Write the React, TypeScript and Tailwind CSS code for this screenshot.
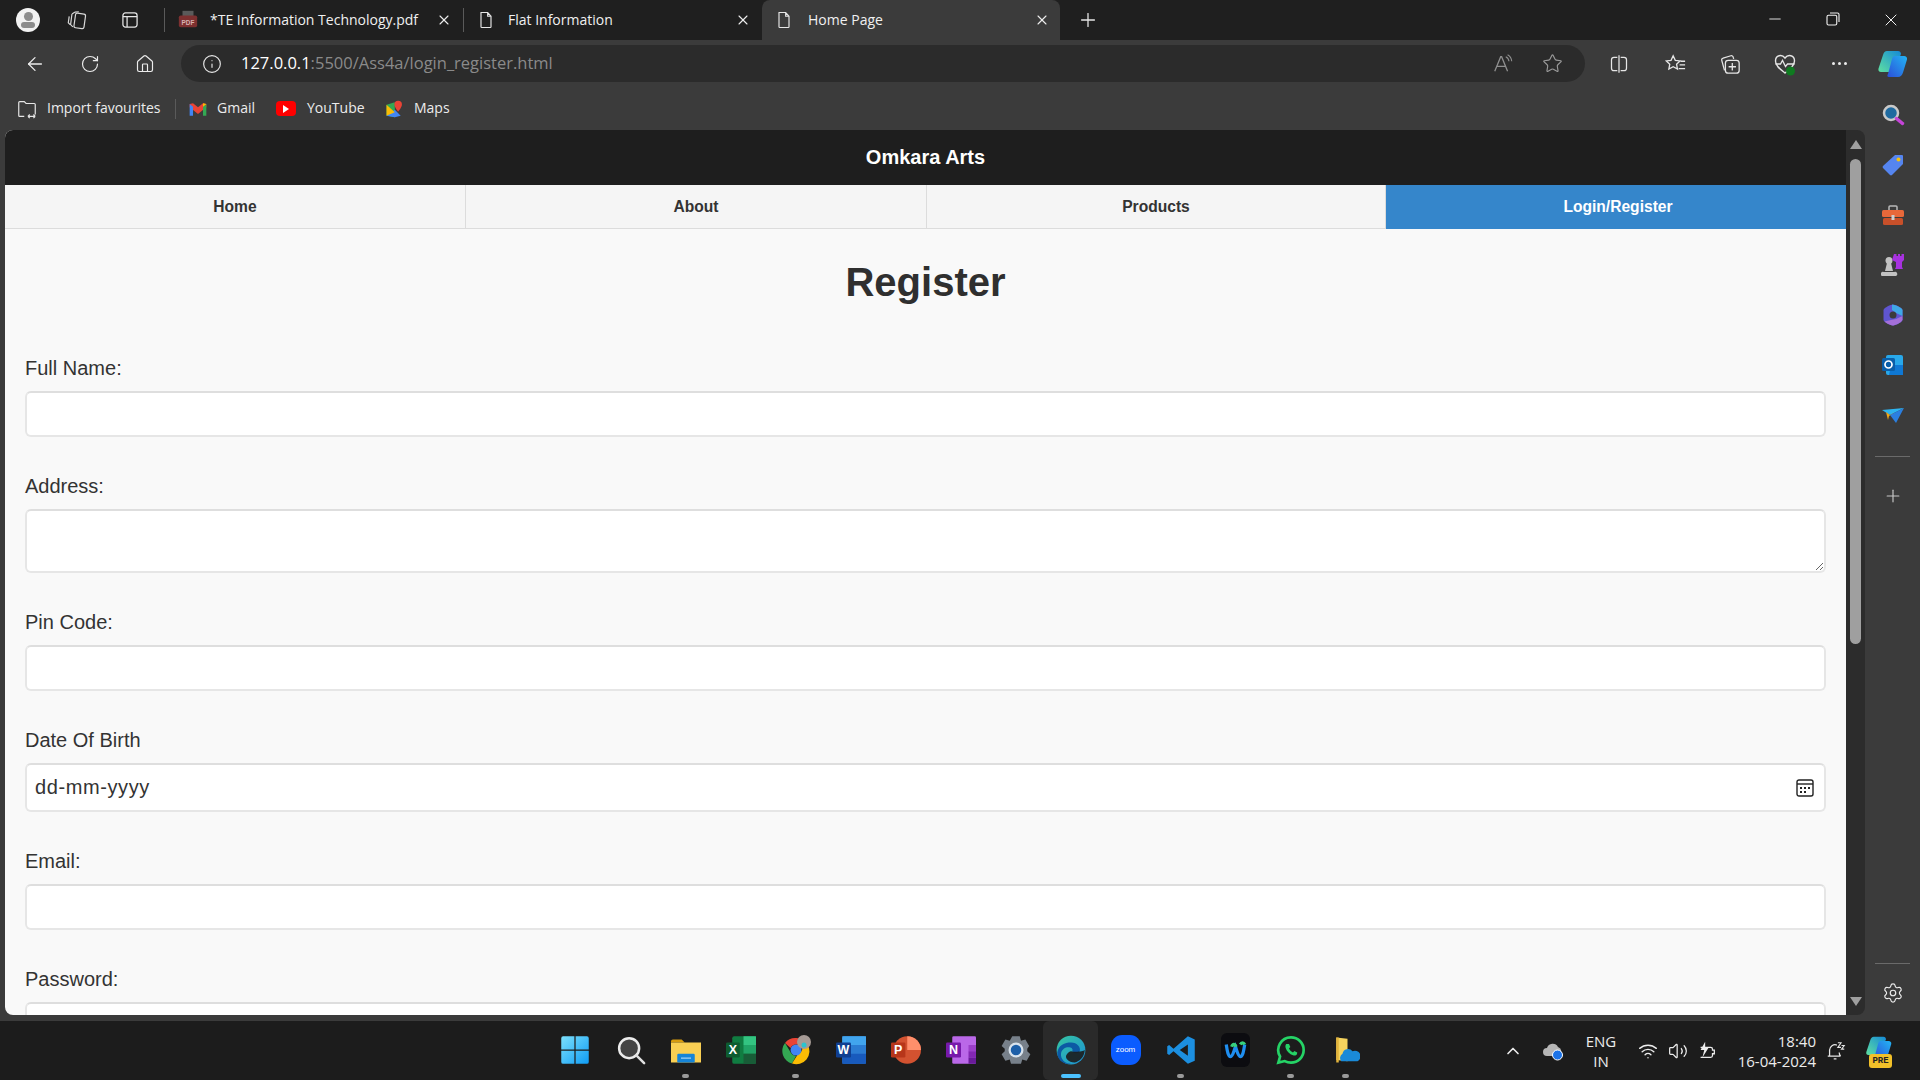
import { ArrowLeft, ChevronUp, Home, Info, Minus, Plus, RotateCw, Settings, Star, Volume2, Wifi, X } from 'lucide-react';
import type { ReactNode } from 'react';

const ui = "[font-family:'Open_Sans',sans-serif]";

function Svg({ size = 24, box = 24, children, className = '' }: { size?: number; box?: number; children: ReactNode; className?: string }) {
  return (
    <svg width={size} height={size} viewBox={`0 0 ${box} ${box}`} fill="none" className={`shrink-0 ${className}`}>
      {children}
    </svg>
  );
}

function PageIcon() {
  return (
    <Svg size={20}>
      <path d="M6 3h8l4 4.5V20a1 1 0 0 1-1 1H7a1 1 0 0 1-1-1V4a1 1 0 0 1 0-1zM14 3v4.5h4" stroke="#e6e6e6" strokeWidth="1.4" />
    </Svg>
  );
}

function PdfIcon() {
  return (
    <Svg size={22}>
      <rect x="6" y="2" width="12" height="6" fill="#5a5a5a" />
      <rect x="2" y="7" width="20" height="13" rx="2" fill="#7d3030" />
      <text x="12" y="17" textAnchor="middle" fontSize="7" fontWeight="700" fill="#d8b0b0" fontFamily="Liberation Sans">PDF</text>
    </Svg>
  );
}

function Tab({ icon, title, active = false, gap }: { icon: ReactNode; title: string; active?: boolean; gap: string }) {
  return (
    <div className={`w-[298px] h-10 flex items-center pl-[12px] ${active ? 'pr-[10px] bg-[#3b3b3b] rounded-t-[8px]' : 'pr-[11px]'} ${gap}`}>
      {icon}
      <span className="-mt-[2px] text-[14px] text-[#f0f0f0] whitespace-nowrap">{title}</span>
      <X size={16} color="#eeeeee" strokeWidth={1.6} className="ml-auto" />
    </div>
  );
}

function TitleBar() {
  return (
    <div className={`h-10 flex items-center bg-[#1f1f1f] ${ui}`}>
      <div className="ml-[16px] w-6 h-6 rounded-full bg-[#f2f2f2] flex flex-col items-center justify-center overflow-hidden shrink-0">
        <div className="w-[9px] h-[9px] rounded-full bg-[#8c8c8c]" />
        <div className="w-[14px] h-[6px] rounded-[3px] mt-[1px] bg-[#8c8c8c]" />
      </div>
      <Svg size={22} className="ml-[26px]">
        <rect x="9.500" y="5" width="11" height="16" rx="2" transform="rotate(8 15 13)" stroke="#d8d8d8" strokeWidth="1.300" />
        <path d="M9.500 3.500L14 3M6.500 5.500L5 17l2.500 2.500M3.500 8L2.500 15l2 2M9.500 3.500L6.500 5.500" stroke="#d8d8d8" strokeWidth="1.300" />
      </Svg>
      <Svg size={20} className="ml-[32px]">
        <rect x="3.500" y="3.500" width="17" height="17" rx="3" stroke="#e6e6e6" strokeWidth="1.500" />
        <path d="M3.500 8h17M8.500 8v12.500" stroke="#e6e6e6" strokeWidth="1.500" />
      </Svg>
      <div className="ml-[24px] w-px h-6 bg-[#5a5a5a]" />
      <Tab icon={<PdfIcon />} title="*TE Information Technology.pdf" gap="gap-[11px]" />
      <div className="w-px h-6 bg-[#5a5a5a]" />
      <Tab icon={<PageIcon />} title="Flat Information" gap="gap-[12px]" />
      <Tab icon={<PageIcon />} title="Home Page" active gap="gap-[14px]" />
      <Plus size={22} color="#e6e6e6" strokeWidth={1.4} className="ml-[17px]" />
      <div className="ml-auto flex">
        <div className="w-[58px] flex justify-center"><Minus size={18} color="#f0f0f0" strokeWidth={1.2} /></div>
        <div className="w-[58px] flex justify-center">
          <Svg size={18}>
            <rect x="4" y="7" width="13" height="13" rx="2" stroke="#f0f0f0" strokeWidth="1.500" />
            <path d="M8 4h10a2 2 0 0 1 2 2v10" stroke="#f0f0f0" strokeWidth="1.500" />
          </Svg>
        </div>
        <div className="w-[58px] flex justify-center"><X size={20} color="#f0f0f0" strokeWidth={1.2} /></div>
      </div>
    </div>
  );
}

function Toolbar() {
  return (
    <div className={`h-[47px] flex items-center bg-[#3b3b3b] ${ui}`}>
      <ArrowLeft size={22} color="#ececec" strokeWidth={1.4} className="ml-[24px]" />
      <RotateCw size={20} color="#ececec" strokeWidth={1.4} className="ml-[34px]" />
      <Home size={20} color="#ececec" strokeWidth={1.4} className="ml-[35px]" />
      <div className="ml-[26px] w-[1404px] h-[37px] rounded-full bg-[#2b2b2b] flex items-center pl-[21px] pr-[22px]">
        <Info size={20} color="#e6e6e6" strokeWidth={1.4} />
        <span className="ml-[19px] text-[16.5px] whitespace-nowrap">
          <span className="text-white">127.0.0.1</span>
          <span className="text-[#8a8a8a]">:5500/Ass4a/login_register.html</span>
        </span>
        <Svg size={22} className="ml-auto">
          <path d="M3 20L9.500 4h1L17 20M5.500 14.500h9.500" stroke="#8f8f8f" strokeWidth="1.400" />
          <path d="M15 4a6 6 0 0 1 3.500 5M17 2a9 9 0 0 1 4.500 7" stroke="#8f8f8f" strokeWidth="1.200" />
        </Svg>
        <Star size={21} color="#9a9a9a" strokeWidth={1.3} className="ml-[28px]" />
      </div>
      <Svg size={20} className="ml-[24px]">
        <path d="M10 4H6a3 3 0 0 0-3 3v10a3 3 0 0 0 3 3h4M14 4h4a3 3 0 0 1 3 3v10a3 3 0 0 1-3 3h-4M12 1.500v21" stroke="#e6e6e6" strokeWidth="1.500" />
      </Svg>
      <Svg size={22} className="ml-[35px]">
        <path d="M10 3l2.300 5 5.200.6-3.800 3.600 1 5.300-4.700-2.600-4.700 2.600 1-5.300L2.500 8.600 7.700 8z" stroke="#e6e6e6" strokeWidth="1.400" />
        <path d="M18 9h5M17 13h6M16 17h7" stroke="#e6e6e6" strokeWidth="1.400" />
      </Svg>
      <Svg size={22} className="ml-[33px]">
        <path d="M6 19L3 8a2 2 0 0 1 1.500-2.500L13 3a2 2 0 0 1 2.500 1.500l.5 2" stroke="#e6e6e6" strokeWidth="1.400" />
        <rect x="7" y="8" width="15" height="14" rx="3" stroke="#e6e6e6" strokeWidth="1.400" />
        <path d="M14.500 11v8M10.500 15h8" stroke="#e6e6e6" strokeWidth="1.400" />
      </Svg>
      <Svg size={24} className="ml-[32px]">
        <path d="M12 6C9 2 2.500 3 2.500 9c0 5 5 8.500 9.500 12 4.500-3.500 9.500-7 9.500-12 0-6-6.500-7-9.500-3z" stroke="#e6e6e6" strokeWidth="1.400" />
        <path d="M2.500 12h5l2-3.500 3 6 2-2.500h7" stroke="#e6e6e6" strokeWidth="1.300" />
        <circle cx="17.500" cy="19" r="4.500" fill="#0f7b20" />
      </Svg>
      <div className="ml-[32px] w-[20px] flex justify-center gap-[3px]">
        <i className="w-[3px] h-[3px] rounded-full bg-[#ececec]" />
        <i className="w-[3px] h-[3px] rounded-full bg-[#ececec]" />
        <i className="w-[3px] h-[3px] rounded-full bg-[#ececec]" />
      </div>
      <CopilotLogo size={32} className="ml-[28px]" />
    </div>
  );
}

function CopilotLogo({ size, className = '' }: { size: number; className?: string }) {
  return (
    <Svg size={size} box={32} className={className}>
      <defs>
        <linearGradient id="cpA" x1="0" y1="1" x2="1" y2="0"><stop offset="0" stopColor="#5fe0a0" /><stop offset="1" stopColor="#1489d8" /></linearGradient>
        <linearGradient id="cpB" x1="0" y1="1" x2="1" y2="0"><stop offset="0" stopColor="#2b4fd8" /><stop offset="1" stopColor="#23b4f4" /></linearGradient>
      </defs>
      <path d="M10 3h11c2 0 3 1.500 3 3l-6 15c-1 2-2 3-4 3H4c-2 0-3-1.500-2.500-3.500L6 7c.8-2.500 2-4 4-4z" fill="url(#cpA)" />
      <path d="M18 8h9c2 0 3.500 1.500 3 3.500l-4 13c-.7 2.500-2.500 4.500-5 4.500H12c-2 0-2-1.500-1-3l4-15c.5-2 1.500-3 3-3z" fill="url(#cpB)" />
    </Svg>
  );
}

function Bookmarks() {
  return (
    <div className={`h-[43px] flex items-center bg-[#3b3b3b] text-[14px] text-[#ececec] ${ui}`}>
      <Svg size={22} className="ml-[16px]">
        <path d="M3 19V5a1 1 0 0 1 1-1h5l2 2h9a1 1 0 0 1 1 1v11M3 19a1 1 0 0 0 1 1h5M13 20h8M13 20l2-2M13 20l2 2M21 20l-2-2M21 20l-2 2" stroke="#e6e6e6" strokeWidth="1.300" />
      </Svg>
      <span className="ml-[9px] -mt-[2px] w-[116px] whitespace-nowrap">Import favourites</span>
      <div className="ml-[12px] w-px h-5 bg-[#5a5a5a]" />
      <Svg size={20} className="ml-[12px]">
        <path d="M2 6l4-1 6 5 6-5 4 1v4l-10 8-10-8z" fill="#ea4335" />
        <path d="M2 20V6l4 3.200V20z" fill="#4285f4" />
        <path d="M22 20V6l-4 3.200V20z" fill="#34a853" />
        <path d="M22 6l-4 3.200V5z" fill="#fbbc04" />
      </Svg>
      <span className="ml-[9px] -mt-[2px] w-[40px] whitespace-nowrap">Gmail</span>
      <div className="ml-[19px] w-5 h-[15px] rounded-[4px] bg-[#f00] flex items-center justify-center">
        <div className="w-0 h-0 border-y-[4px] border-y-transparent border-l-[6px] border-l-white" />
      </div>
      <span className="ml-[11px] -mt-[2px] w-[60px] whitespace-nowrap">YouTube</span>
      <Svg size={20} className="ml-[17px]">
        <path d="M3 7l10-3v18l-10-2z" fill="#34a853" />
        <path d="M3 20l10-7 7 7-7 2z" fill="#4285f4" />
        <path d="M3 7l10 9-10 4z" fill="#fbbc04" />
        <path d="M17 2a4.500 4.500 0 0 0-4.500 4.500C12.500 10 17 15 17 15s4.500-5 4.500-8.500A4.500 4.500 0 0 0 17 2z" fill="#ea4335" />
      </Svg>
      <span className="ml-[10px] -mt-[2px] whitespace-nowrap">Maps</span>
    </div>
  );
}

function SideSlot({ children }: { children: ReactNode }) {
  return <div className="h-[50px] flex items-center justify-center">{children}</div>;
}

function Sidebar() {
  return (
    <div className="w-[55px] flex flex-col items-center bg-[#3b3b3b] pt-[3px] pb-[11px]">
      <SideSlot>
        <Svg size={24}>
          <circle cx="10" cy="10" r="7" fill="#1f6aa0" stroke="#c9c9c9" strokeWidth="2.500" />
          <path d="M15.500 15.500l6 5" stroke="#c544d8" strokeWidth="3.500" strokeLinecap="round" />
        </Svg>
      </SideSlot>
      <SideSlot>
        <Svg size={24}>
          <path d="M14 2h7a1 1 0 0 1 1 1v8l-11 11a1.500 1.500 0 0 1-2 0l-7-7a1.500 1.500 0 0 1 0-2z" fill="#5585f0" />
          <circle cx="17.500" cy="6.500" r="2" fill="#f4c20d" />
        </Svg>
      </SideSlot>
      <SideSlot>
        <Svg size={24}>
          <path d="M8 7V4a1 1 0 0 1 1-1h6a1 1 0 0 1 1 1v3" stroke="#b9b9b9" strokeWidth="1.500" />
          <rect x="1" y="7" width="22" height="7" rx="1.500" fill="#e8683a" />
          <rect x="2" y="15" width="20" height="7" rx="1.500" fill="#c8502a" />
          <rect x="10.500" y="12" width="3" height="5" fill="#cfcfcf" />
        </Svg>
      </SideSlot>
      <SideSlot>
        <Svg size={24}>
          <circle cx="8" cy="7.500" r="3.500" fill="#c2c2c2" />
          <path d="M6 10h4l2 8H4zM1 23a2 2 0 0 1 2-4h10a2 2 0 0 1 2 4z" fill="#c2c2c2" />
          <path d="M13 1h2.500v2H17V1h2v2h1.500V1H23v6l-2 2v5l1 2h-8l1-2V9l-4-2z" fill="#a832e0" />
        </Svg>
      </SideSlot>
      <SideSlot>
        <Svg size={24}>
          <path d="M12 1.500c2 0 9 3 9.500 5.500v10c-.5 2.500-7.500 5.500-9.500 5.500S3 19.500 2.500 17V7C3 4.500 10 1.500 12 1.500z" fill="#5f55d0" />
          <path d="M11 1.500c2 0 10 3 10.500 5.500v6l-6.500-3-4-3z" fill="#3fa8e6" />
          <path d="M3.500 18.500c2 2 7 4 8.500 4s8-2.500 9.500-5.500v-4l-6.500 3-5 1z" fill="#a46fd8" />
          <circle cx="12" cy="12" r="3.500" fill="#3b3b3b" />
        </Svg>
      </SideSlot>
      <SideSlot>
        <Svg size={24}>
          <rect x="5" y="2" width="17" height="20" rx="2" fill="#28a8ea" />
          <path d="M10 12h12v10H8z" fill="#0f78d4" />
          <rect x="1" y="5" width="13" height="13" rx="1.500" fill="#0a5ea8" />
          <circle cx="7.500" cy="11.500" r="3.500" stroke="#fff" strokeWidth="1.700" />
        </Svg>
      </SideSlot>
      <SideSlot>
        <Svg size={24}>
          <path d="M1 7l22-2-14 7z" fill="#2db4f0" />
          <path d="M9 12L23 5l-8 15z" fill="#2b7fe0" />
          <path d="M5 9l4 3 5-3-6 4-1 4z" fill="#f0a818" />
        </Svg>
      </SideSlot>
      <div className="mt-[16px] w-[35px] h-px bg-[#6a6a6a]" />
      <Plus size={20} color="#c8c8c8" strokeWidth={1.4} className="mt-[29px]" />
      <div className="mt-auto w-[35px] h-px bg-[#6a6a6a]" />
      <Settings size={22} color="#ececec" strokeWidth={1.3} className="mt-[18px]" />
    </div>
  );
}

function Scrollbar() {
  return (
    <div className="w-[19px] flex flex-col items-center bg-[#2c2c2c] rounded-r-[8px] pt-[10px] pb-[9px]">
      <div className="w-0 h-0 border-x-[6px] border-x-transparent border-b-[9px] border-b-[#9f9f9f]" />
      <div className="mt-[10px] w-[11px] h-[485px] rounded-[6px] bg-[#9f9f9f]" />
      <div className="mt-auto w-0 h-0 border-x-[6px] border-x-transparent border-t-[9px] border-t-[#9f9f9f]" />
    </div>
  );
}

const fieldCls = 'block w-full h-[46px] mb-[37px] rounded-[6px] border-2 border-[#e6e6e6] border-t-[#dedede] bg-white outline-none';

function Label({ children }: { children: ReactNode }) {
  return <label className="block h-[23px] leading-[25px] mb-[12px] text-[20px] text-[#333]">{children}</label>;
}

function RegisterPage() {
  const navItems = ['Home', 'About', 'Products', 'Login/Register'];
  return (
    <div className="w-[1841px] h-[885px] overflow-hidden rounded-l-[8px] bg-[#f9f9f9] [font-family:'Liberation_Sans',Arial,sans-serif]">
      <header className="h-[55px] pb-[2px] flex items-center justify-center bg-[#1e1e1e] text-[20px] font-bold text-white">Omkara Arts</header>
      <nav className="h-[44px] grid grid-cols-[461px_461px_459px_460px]">
        {navItems.map((it, i) => (
          <a
            key={it}
            className={`flex items-center justify-center text-[15.6px] font-bold ${
              i === 3 ? 'pl-[4px] bg-[#3586cb] text-white' : 'bg-[#f5f5f5] text-[#333] border-b border-r border-[#dcdcdc]'
            }`}
          >
            {it}
          </a>
        ))}
      </nav>
      <h1 className="mt-[30px] h-[46px] leading-[46px] text-center text-[40px] font-bold text-[#2f2f2f]">Register</h1>
      <form className="mt-[51px] px-[20px]">
        <Label>Full Name:</Label>
        <input type="text" className={fieldCls} />
        <Label>Address:</Label>
        <textarea className="block w-full h-[64px] mb-[37px] rounded-[6px] border-2 border-[#e6e6e6] border-t-[#dedede] bg-white outline-none resize-y" />
        <Label>Pin Code:</Label>
        <input type="text" className={fieldCls} />
        <Label>Date Of Birth</Label>
        <div className="flex items-center justify-between h-[49px] mb-[37px] rounded-[6px] border-2 border-[#e6e6e6] border-t-[#dedede] bg-white pl-[8px] pr-[10px] text-[20px] tracking-[0.6px] text-[#333]">
          <span className="-mt-[2px]">dd-mm-yyyy</span>
          <Svg size={18} box={18}>
            <rect x="1" y="1" width="16" height="16" rx="2" stroke="#222" strokeWidth="1.400" />
            <path d="M1 5h16" stroke="#222" strokeWidth="1.400" />
            <path d="M4 8h2v2H4zM8 8h2v2H8zM12 8h2v2h-2zM4 12h2v2H4zM8 12h2v2H8z" fill="#222" />
          </Svg>
        </div>
        <Label>Email:</Label>
        <input type="email" className={fieldCls} />
        <Label>Password:</Label>
        <input type="password" className={fieldCls} />
      </form>
    </div>
  );
}

function TaskIcon({ children, dot = false, active = false }: { children: ReactNode; dot?: boolean; active?: boolean }) {
  return (
    <div className={`relative w-[55px] h-[59px] pb-[2px] flex items-center justify-center ${active ? 'bg-[#2a2a2a] rounded-[6px]' : ''}`}>
      {children}
      {dot && <div className="absolute bottom-[2px] left-[24px] w-[7px] h-[4px] rounded-full bg-[#9a9a9a]" />}
      {active && <div className="absolute bottom-[2px] left-[18px] w-[20px] h-[4px] rounded-full bg-[#4cc2ff]" />}
    </div>
  );
}

function Taskbar() {
  return (
    <div className={`h-[59px] flex items-center bg-[#1c1c1c] pl-[548px] ${ui}`}>
      <TaskIcon>
        <Svg size={30} className="-ml-[2px]">
          <defs>
            <linearGradient id="winA" x1="0" y1="0" x2="1" y2="1"><stop offset="0" stopColor="#7ce0fb" /><stop offset="1" stopColor="#0f9cf5" /></linearGradient>
          </defs>
          <path d="M1 2.500A1.500 1.500 0 0 1 2.500 1h9v10.500H1zM12.500 1h9A1.500 1.500 0 0 1 23 2.500v9H12.500zM1 12.500h10.500V23h-9A1.500 1.500 0 0 1 1 21.500zM12.500 12.500H23v9a1.500 1.500 0 0 1-1.500 1.500h-9z" fill="url(#winA)" />
        </Svg>
      </TaskIcon>
      <TaskIcon>
        <Svg size={30}>
          <circle cx="10.500" cy="10.500" r="8" fill="#444" stroke="#ececec" strokeWidth="2" />
          <path d="M16.500 16.500l6 6" stroke="#e0e0e0" strokeWidth="2" strokeLinecap="round" />
        </Svg>
      </TaskIcon>
      <TaskIcon dot>
        <Svg size={30}>
          <path d="M0 5a1.500 1.500 0 0 1 1.500-1.500h7l2.500 2.500H0z" fill="#d79b0e" />
          <rect x="0" y="6" width="24" height="16" fill="#f9cf53" />
          <rect x="5" y="15" width="14" height="7" rx="1" fill="#1584d8" />
          <rect x="8" y="18" width="8" height="1" fill="#9fd0f5" />
        </Svg>
      </TaskIcon>
      <TaskIcon>
        <Svg size={30}>
          <rect x="5" y="1" width="19" height="22" rx="1.500" fill="#107c41" />
          <rect x="14" y="1" width="10" height="7" fill="#33c481" />
          <rect x="14" y="8" width="10" height="7" fill="#21a366" />
          <rect x="14" y="15" width="10" height="8" fill="#185c37" />
          <rect x="0" y="6" width="11" height="12" rx="1" fill="#0e5c30" />
          <text x="5.500" y="15.500" textAnchor="middle" fontSize="10" fontWeight="700" fill="#fff" fontFamily="Liberation Sans">X</text>
        </Svg>
      </TaskIcon>
      <TaskIcon dot>
        <Svg size={32} box={32}>
          <path d="M16 4a13 13 0 0 1 11.500 6.500H16a6 6 0 0 0-5.500 3.500L5 9a13 13 0 0 1 11-5z" fill="#ea4335" />
          <path d="M5 9l6 10a6 6 0 0 0 5 3l-4 7.500A13 13 0 0 1 5 9z" fill="#34a853" />
          <path d="M27.500 10.500A13 13 0 0 1 12 29.500L18 20a6 6 0 0 0 3-9.500z" fill="#fbbc04" />
          <circle cx="16" cy="16" r="5.500" fill="#4285f4" />
          <circle cx="24" cy="8" r="7" fill="#a59a95" />
          <circle cx="24" cy="11" r="2.500" fill="#2ac4d0" />
        </Svg>
      </TaskIcon>
      <TaskIcon>
        <Svg size={30}>
          <rect x="5" y="1" width="19" height="22" rx="1.500" fill="#2b7cd3" />
          <rect x="5" y="1" width="19" height="7" fill="#41a5ee" />
          <rect x="5" y="15" width="19" height="8" fill="#185abd" />
          <rect x="0" y="6" width="12" height="12" rx="1" fill="#103f91" />
          <text x="6" y="15.500" textAnchor="middle" fontSize="10" fontWeight="700" fill="#fff" fontFamily="Liberation Sans">W</text>
        </Svg>
      </TaskIcon>
      <TaskIcon>
        <Svg size={30}>
          <circle cx="13" cy="12" r="11" fill="#d35230" />
          <path d="M13 1a11 11 0 0 1 11 11H13z" fill="#ff8f6b" />
          <rect x="0" y="6" width="11.500" height="12" rx="1" fill="#b7361a" />
          <text x="5.800" y="15.500" textAnchor="middle" fontSize="10" fontWeight="700" fill="#fff" fontFamily="Liberation Sans">P</text>
        </Svg>
      </TaskIcon>
      <TaskIcon>
        <Svg size={30}>
          <rect x="5" y="1" width="19" height="22" rx="1" fill="#ba68e8" />
          <rect x="18" y="8" width="6" height="5" fill="#9b3fc9" />
          <rect x="18" y="13" width="6" height="5" fill="#8327b3" />
          <rect x="18" y="18" width="6" height="5" fill="#6a1b9a" />
          <rect x="0" y="6" width="12" height="12" rx="1" fill="#7719aa" />
          <text x="6" y="15.500" textAnchor="middle" fontSize="10" fontWeight="700" fill="#fff" fontFamily="Liberation Sans">N</text>
        </Svg>
      </TaskIcon>
      <TaskIcon>
        <Svg size={30}>
          <path d="M9 1h6l1 3.500 3.500-1 3 5.200L21 11v2l2.500 2.300-3 5.200-3.500-1L16 23H8l-1-3.500-3.500 1-3-5.200L3 13v-2L.5 8.700l3-5.200 3.500 1z" fill="#77808a" />
          <circle cx="12" cy="12" r="6" fill="#d8e2ec" />
          <circle cx="12" cy="12" r="4.200" fill="#1d5fa8" />
        </Svg>
      </TaskIcon>
      <TaskIcon active>
        <Svg size={30}>
          <defs>
            <linearGradient id="edgeA" x1="0" y1="0" x2="1" y2="1"><stop offset="0" stopColor="#36c6a0" /><stop offset="1" stopColor="#1b8fd8" /></linearGradient>
          </defs>
          <circle cx="12" cy="12" r="11.500" fill="url(#edgeA)" />
          <path d="M1 14c1-6 6-8 11-8s8 4 7 7c-1 2-5 2-6 0 2-4-8-5-9 2-.5 4 3 8 8 8-6 1-11-3-11-9z" fill="#0c59a4" />
          <path d="M12 13c4 1 10 0 11-1-.5 6-4 9-8 10-5 0-9-4-6-7 1-1 2-2 3-2z" fill="#1c1c1c" opacity="0.9" />
        </Svg>
      </TaskIcon>
      <TaskIcon>
        <div className="w-[30px] h-[30px] rounded-[11px] bg-[#0b5cff] flex items-center justify-center text-[8px] text-white [font-family:'Liberation_Sans',sans-serif]">zoom</div>
      </TaskIcon>
      <TaskIcon dot>
        <Svg size={30}>
          <path d="M17.500 1L23 3.500v17L17.500 23 6 13l-3.500 3L1 15V9l1.500-1L6 11zM17.500 7.500L11 12l6.500 4.500z" fill="#1c8fe0" />
        </Svg>
      </TaskIcon>
      <TaskIcon>
        <div className="w-[29px] h-[34px] rounded-[6px] bg-[#0c0c10] flex items-center justify-center">
          <Svg size={26}>
            <path d="M3 7c1 7 2 11 4 11s3-5 4.500-9c1.500 4 2.500 9 4.500 9s3-4 4-11" stroke="#1f8ef0" strokeWidth="3" />
            <path d="M8 9c1-3 3-3 4 0M16 7c1-2 3-2 4 0" stroke="#37d07c" strokeWidth="3" />
          </Svg>
        </div>
      </TaskIcon>
      <TaskIcon dot>
        <Svg size={32}>
          <path d="M12 2.500a9.500 9.500 0 0 1 0 19c-1.700 0-3.300-.4-4.700-1.200L2.500 21.500l1.300-4.600A9.500 9.500 0 0 1 12 2.500z" stroke="#25d366" strokeWidth="2" />
          <path d="M8.500 7.500c-.5.500-1 1.500-.5 3 .8 2.500 3 4.800 5.500 5.500 1.500.4 2.500 0 3-1l.2-1.200-2.200-1.100-1 1.100c-1.200-.5-2.400-1.700-3-3l1-1-1-2.300z" fill="#25d366" />
        </Svg>
      </TaskIcon>
      <TaskIcon dot>
        <Svg size={30} className="-ml-[2px]">
          <path d="M5 2l9 1v18l-9-1z" fill="#f4d35e" />
          <path d="M5 2h2v20H5z" fill="#e2b33c" />
          <path d="M9 21a4 4 0 0 1 1-6 4.500 4.500 0 0 1 8-2 4 4 0 0 1 4 8z" fill="#1a8ad8" />
        </Svg>
      </TaskIcon>
      <ChevronUp size={20} color="#ececec" strokeWidth={2} className="ml-[130px]" />
      <Svg size={24} className="ml-[18px]">
        <path d="M6 17a4 4 0 0 1 0-8 6 6 0 0 1 11-1 5 5 0 0 1 1 9z" fill="#b5b5b5" />
        <circle cx="16.500" cy="16" r="5" fill="#1b73e8" stroke="#fff" strokeWidth="1" />
      </Svg>
      <div className="ml-[14px] w-[44px] text-center text-[15px] leading-[20px] text-[#ececec]">ENG<br />IN</div>
      <Wifi size={20} color="#ececec" strokeWidth={1.7} className="ml-[15px]" />
      <Volume2 size={20} color="#ececec" strokeWidth={1.5} className="ml-[10px]" />
      <Svg size={22} className="ml-[8px]">
        <path d="M5 8h11a2 2 0 0 1 2 2v1h2v4h-2v2a2 2 0 0 1-2 2H5" stroke="#ececec" strokeWidth="1.400" />
        <path d="M10 2L5 11h4l-2 8 7-11h-4z" fill="#ececec" />
      </Svg>
      <div className="ml-[8px] w-[90px] text-right text-[15px] leading-[20px] text-[#ececec] whitespace-nowrap">18:40<br />16-04-2024</div>
      <Svg size={22} className="ml-[9px]">
        <path d="M5 17v-6a6 6 0 0 1 8-5.500M3 17.500h14M17 17.500c-1-1-1.500-2-1.500-4M9.500 20.500h3" stroke="#e6e6e6" strokeWidth="1.400" />
        <path d="M14 3h3.500L14 8h3.500M18 6h3l-3 4h3" stroke="#e6e6e6" strokeWidth="1.200" />
      </Svg>
      <div className="relative ml-[18px] w-[30px] h-[34px]">
        <CopilotLogo size={28} />
        <div className="absolute left-[4px] bottom-0 w-[23px] h-[14px] rounded-[3px] bg-[#f2c029] text-center text-[9px] leading-[14px] font-bold text-[#222] [font-family:'Liberation_Mono',monospace]">PRE</div>
      </div>
    </div>
  );
}

export default function App() {
  return (
    <div className="w-[1920px] h-[1080px] flex flex-col overflow-hidden bg-[#3b3b3b]">
      <TitleBar />
      <Toolbar />
      <div className="flex h-[928px]">
        <div className="w-[1865px] flex flex-col">
          <Bookmarks />
          <div className="flex pl-[5px]">
            <RegisterPage />
            <Scrollbar />
          </div>
        </div>
        <Sidebar />
      </div>
      <div className="h-[6px] bg-[#3b3b3b]" />
      <Taskbar />
    </div>
  );
}
